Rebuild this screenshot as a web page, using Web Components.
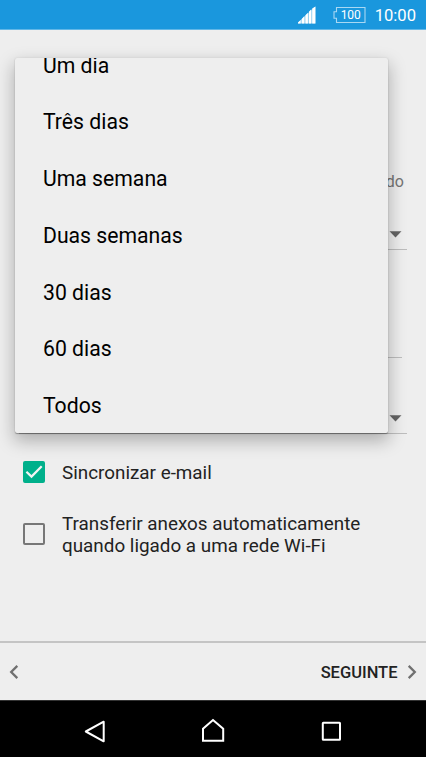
<!DOCTYPE html>
<html lang="pt">
<head>
<meta charset="utf-8">
<title>Configurar conta</title>
<style>
html,body{margin:0;padding:0;background:#eee}
</style>
</head>
<body>
<mail-setup></mail-setup>
<script>
const define = (name, html) => {
  const t = document.createElement('template');
  t.innerHTML = html;
  customElements.define(name, class extends HTMLElement {
    constructor() {
      super();
      this.attachShadow({mode: 'open'}).appendChild(t.content.cloneNode(true));
    }
  });
};

define('status-bar', `
<style>
:host{display:flex;align-items:center;justify-content:flex-end;box-sizing:border-box;height:30px;padding:1px 10px 0 0;background:#1a97dd;border-bottom:1px solid #62b7e7;color:#fff;flex:none}
svg{display:block;flex:none}
.battery{display:grid;margin:0 9px 0 17px}
.battery>*{grid-area:1/1}
.battery span{font-size:12px;line-height:18px;padding-left:8px;letter-spacing:-.1px}
.time{font-size:16.6px;line-height:28px;padding-top:2px}
</style>
<svg width="18" height="18" viewBox="0 0 18 18" fill="#fff"><path fill="#8ccbee" d="M0 17.5V16.5L17.4 .5V17.5Z"/><path d="M0 17.5V16.5L2.7 14V17.5ZM3.7 17.5V13L6.4 10V17.5ZM7.4 17.5V9.3L9.9 6.8V17.5ZM10.9 17.5V5.8L13.3 3.2V17.5ZM14.2 17.5V2.4L17.4 .5V17.5Z"/></svg>
<div class="battery">
<svg width="33" height="18" viewBox="0 0 33 18" fill="none" stroke="#a9d8f3" stroke-width="1.1"><path d="M3.5 1.5H32V16.5H3.5V12.3H1V5.7H3.5Z"/></svg>
<span>100</span>
</div>
<div class="time">10:00</div>
`);

define('setup-field', `
<style>
:host{display:flex;box-sizing:border-box;justify-content:flex-end;align-items:flex-end;flex:none;border-bottom:1.3px solid #bdbdbd}
</style>
<slot></slot>
`);

define('drop-arrow', `
<style>:host{display:block;padding:0 5px 11px 0}svg{display:block}</style>
<svg width="13" height="7" viewBox="0 0 13 7"><path d="M.5 .3H12.5L6.5 6.6Z" fill="#646464"/></svg>
`);

define('check-row', `
<style>
:host{display:flex;align-items:center;font-size:18.85px;line-height:22.5px;color:#222;flex:none}
.box{display:block;box-sizing:border-box;width:22px;height:22px;border:2px solid #777;border-radius:2px;margin:0 17px 0 23px;flex:none}
:host([checked]) .box{background:#00b08b;border-color:#00b08b}
svg{display:none}
:host([checked]) svg{display:block;margin:-2px}
.text{padding-top:1px;margin-bottom:-1px}
</style>
<div class="box"><svg width="22" height="22" viewBox="0 0 22 22" fill="none" stroke="#f4f4f4" stroke-width="2.2"><path d="M3.4 10.7L8.5 15.6L18.7 5.2"/></svg></div>
<div class="text"><slot></slot></div>
`);

define('option-item', `
<style>
:host{display:flex;align-items:center;box-sizing:border-box;height:56.75px;padding:2px 0 0 28px;font-size:21.2px;line-height:25px;color:#000;flex:none}
</style>
<slot></slot>
`);

define('option-popup', `
<style>
:host{position:absolute;left:15px;top:58px;width:373px;height:375px;border-radius:2px;background:#eee;
box-shadow:0 1px 1px rgba(0,0,0,.3),0 0 2px rgba(0,0,0,.1),0 7px 17px 1px rgba(0,0,0,.27)}
.list{display:flex;flex-direction:column;justify-content:flex-end;height:375px;overflow:hidden;border-radius:2px}
</style>
<div class="list"><slot></slot></div>
`);

define('step-bar', `
<style>
:host{display:flex;align-items:center;justify-content:space-between;box-sizing:border-box;height:59px;padding:1px 9px 0 9px;border-top:2px solid #c4c4c4;flex:none;color:#222}
.next{display:flex;align-items:center;gap:9.5px;font-size:16.5px;font-weight:500;line-height:20px}
.next span{padding-top:2px}
svg{display:block}
</style>
<svg width="10" height="14" viewBox="0 0 10 14" fill="none" stroke="#707070" stroke-width="2.3"><path d="M8.3 .9L2.2 7L8.3 13.1"/></svg>
<div class="next"><span>SEGUINTE</span><svg width="10" height="14" viewBox="0 0 10 14" fill="none" stroke="#707070" stroke-width="2.3"><path d="M1.7 .9L7.8 7L1.7 13.1"/></svg></div>
`);

define('nav-bar', `
<style>
:host{display:grid;grid-template-columns:84px 118px 119px auto;align-items:center;box-sizing:border-box;height:57px;padding-top:3px;background:#000;border-top:1px solid #333;flex:none}
svg{display:block}
</style>
<i></i>
<svg width="24" height="26" viewBox="84 717 24 26" fill="none" stroke="#fff" stroke-width="2" stroke-linejoin="round"><path d="M103.7 720.7V740.3L85.8 730.5Z"/></svg>
<svg width="24" height="26" viewBox="202 717 24 26" fill="none" stroke="#fff" stroke-width="2"><path d="M203 739.7V727.8L213 719L223.2 727.8V739.7Z"/></svg>
<svg width="24" height="26" viewBox="321 717 24 26" fill="none" stroke="#fff" stroke-width="2"><rect x="322.8" y="721.8" width="17.2" height="17" rx=".5"/></svg>
`);

define('mail-setup', `
<style>
:host{display:flex;flex-direction:column;position:relative;width:426px;height:757px;overflow:hidden;background:#eee;font-family:Roboto,"Liberation Sans",sans-serif}
.form{flex:1;display:flex;flex-direction:column;min-height:0}
.hint{margin-top:142px;text-align:right;padding-right:22px;font-size:16px;line-height:20px;color:#757575}
setup-field{margin:0 19px}
</style>
<status-bar></status-bar>
<div class="form">
<div class="hint">do</div>
<setup-field style="height:58px"><drop-arrow></drop-arrow></setup-field>
<setup-field style="height:108px;margin-right:24px"></setup-field>
<setup-field style="height:76px"><drop-arrow></drop-arrow></setup-field>
<check-row checked style="margin-top:27px">Sincronizar e-mail</check-row>
<check-row style="margin-top:28px">Transferir anexos automaticamente<br>quando ligado a uma rede Wi-Fi</check-row>
</div>
<step-bar></step-bar>
<nav-bar></nav-bar>
<option-popup>
<option-item>Um dia</option-item><option-item>Três dias</option-item><option-item>Uma semana</option-item><option-item>Duas semanas</option-item><option-item>30 dias</option-item><option-item>60 dias</option-item><option-item>Todos</option-item>
</option-popup>
`);
</script>
</body>
</html>
